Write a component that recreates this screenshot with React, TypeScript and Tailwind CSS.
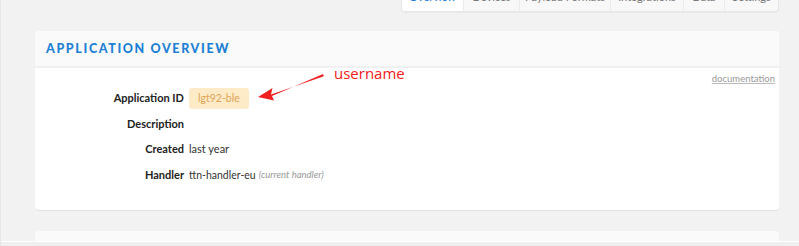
import { useState } from "react";

const tabs = ["Overview", "Devices", "Payload Formats", "Integrations", "Data", "Settings"];
const tabWidths = ["w-[61px]", "w-[56px]", "w-[91px]", "w-[73px]", "w-[41px]", "w-[54px]"];

export default function App() {
  const [active] = useState(0);

  return (
    <div className="relative h-[246px] w-[799px] overflow-hidden border-l border-[#e6e6e6] bg-[#f2f2f2] font-['Lato',sans-serif]">
      {/* Tabs (scrolled, only their bottom edge shows) */}
      <div className="flex justify-end pr-[20px]">
        <div className="-mt-[19px] flex h-[31px] overflow-hidden rounded-b-[4px] border border-[#e7e7e7] bg-[#f8f8f8] shadow-[0_1px_1px_rgba(0,0,0,0.04)]">
          {tabs.map((t, i) => (
            <div
              key={t}
              className={`${tabWidths[i]} flex items-start justify-center pt-[7px] text-[11px] ${
                i === active ? "bg-white text-[#1d80d4]" : "border-l border-[#ebebeb] text-[#777]"
              }`}
            >
              {t}
            </div>
          ))}
        </div>
      </div>

      {/* Application overview card */}
      <div className="ml-[34px] mr-[20px] mt-[19px] overflow-hidden rounded-[4px] border-b border-[#e1e1e1] bg-white">
        <div className="flex h-[37px] items-center border-b-2 border-[#f0f0f0] bg-[#fafafa] px-[11px] pt-[2px]">
          <h2 className="text-[12.5px] font-black tracking-[0.13em] text-[#1d80d4]">APPLICATION OVERVIEW</h2>
        </div>
        <div className="relative h-[142px]">
          <a className="absolute right-[4px] top-[4px] text-[9.5px] text-[#999] underline decoration-[#bbb]">documentation</a>

          <div className="grid grid-cols-[149px_1fr] gap-x-[5px] pt-[21px] text-[11px]">
            <div className="flex h-[19px] items-center justify-end font-bold text-[#222]">Application ID</div>
            <div className="flex h-[19px] items-center">
              <span className="rounded-[3px] bg-[#fdeac7] px-[9px] py-[3px] text-[10.5px] text-[#dfa455]">lgt92-ble</span>
            </div>

            <div className="mt-[7px] flex h-[19px] items-center justify-end font-bold text-[#222]">Description</div>
            <div className="mt-[7px] h-[19px]" />

            <div className="mt-[6px] flex h-[19px] items-center justify-end font-bold text-[#222]">Created</div>
            <div className="mt-[6px] flex h-[19px] items-center text-[#333]">last year</div>

            <div className="mt-[7px] flex h-[19px] items-center justify-end font-bold text-[#222]">Handler</div>
            <div className="mt-[7px] flex h-[19px] items-center text-[10.5px] text-[#333]">
              ttn-handler-eu <span className="ml-[3px] text-[9.5px] italic text-[#999]">(current handler)</span>
            </div>
          </div>

          {/* annotation */}
          <span className="absolute left-[299px] top-[-6px] font-['Open_Sans',sans-serif] text-[15px] text-[#f02020]">username</span>
          <svg className="absolute left-[220px] top-[5px]" width="72" height="30" viewBox="0 0 72 30">
            <path d="M68 1 L68.8 3.2 L16 21.5 L17.5 15 L3 24 L19 27.5 L17 23 Z" fill="#f02020" />
          </svg>
        </div>
      </div>

      {/* Next card header */}
      <div className="ml-[34px] mr-[20px] mt-[20px] h-[20px] rounded-t-[4px] bg-[#fafafa]" />
      <div className="absolute bottom-[4px] left-0 right-0 h-px bg-white" />
      <div className="absolute bottom-0 left-0 right-0 h-[4px] bg-[#efefef]" />
    </div>
  );
}
